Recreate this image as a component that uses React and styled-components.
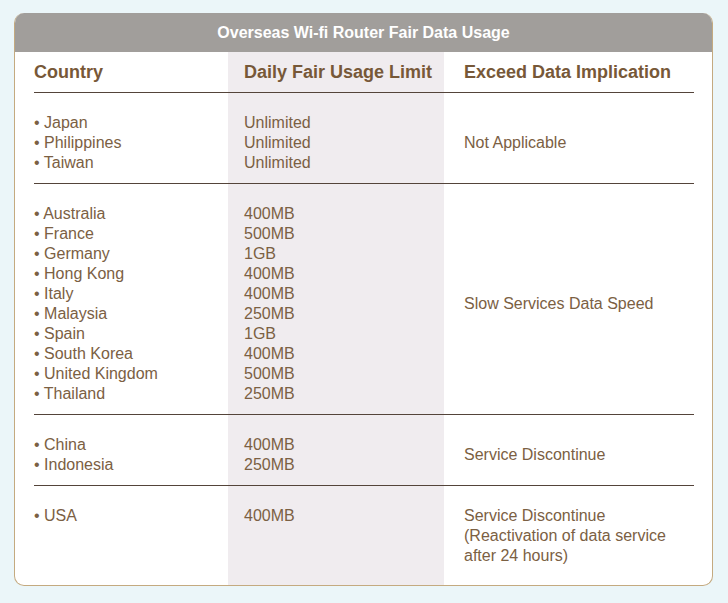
import React from 'react'
import styled, { createGlobalStyle } from 'styled-components'

const GlobalStyle = createGlobalStyle`
  html, body {
    margin: 0;
    padding: 0;
    background: #ebf6f9;
  }
  body {
    font-family: "Liberation Sans", Arial, Helvetica, sans-serif;
  }
`

const Page = styled.div`
  padding: 13px 0 0 14px;
`

const Card = styled.div`
  width: 699px;
  box-sizing: border-box;
  background: #fff;
  border: 1px solid #c4aa80;
  border-top: none;
  border-radius: 10px;
  overflow: hidden;
`

const TitleBar = styled.div`
  height: 39px;
  background: #a19e9b;
  color: #fff;
  font-size: 16px;
  font-weight: bold;
  display: flex;
  align-items: center;
  justify-content: center;
`

const Body = styled.div`
  padding: 0 18px 0 19px;
`

const Row = styled.div`
  display: grid;
  grid-template-columns: 194px 216px 250px;
  border-bottom: ${(p) => (p.$last ? 'none' : '1px solid #54443a')};
`

const Cell = styled.div`
  padding: ${(p) => (p.$head ? '10px' : '20px')} 0
    ${(p) => (p.$head ? '10px' : p.$last ? '19px' : '10px')}
    ${(p) => p.$pad || 0}px;
  background: ${(p) => (p.$shade ? '#f0ecef' : 'transparent')};
  color: ${(p) => (p.$head ? '#775838' : '#7b6043')};
  font-size: ${(p) => (p.$head ? '18px' : '16px')};
  font-weight: ${(p) => (p.$head ? 'bold' : 'normal')};
  line-height: 20px;
  display: flex;
  flex-direction: column;
  justify-content: ${(p) => (p.$center ? 'center' : 'flex-start')};
`

const Line = styled.div`
  white-space: nowrap;
`

const rows = [
  {
    countries: ['Japan', 'Philippines', 'Taiwan'],
    limits: ['Unlimited', 'Unlimited', 'Unlimited'],
    implication: ['Not Applicable'],
  },
  {
    countries: [
      'Australia',
      'France',
      'Germany',
      'Hong Kong',
      'Italy',
      'Malaysia',
      'Spain',
      'South Korea',
      'United Kingdom',
      'Thailand',
    ],
    limits: ['400MB', '500MB', '1GB', '400MB', '400MB', '250MB', '1GB', '400MB', '500MB', '250MB'],
    implication: ['Slow Services Data Speed'],
  },
  {
    countries: ['China', 'Indonesia'],
    limits: ['400MB', '250MB'],
    implication: ['Service Discontinue'],
  },
  {
    countries: ['USA'],
    limits: ['400MB'],
    implication: ['Service Discontinue', '(Reactivation of data service', 'after 24 hours)'],
  },
]

function App() {
  return (
    <Page>
      <GlobalStyle />
      <Card>
        <TitleBar>Overseas Wi-fi Router Fair Data Usage</TitleBar>
        <Body>
          <Row>
            <Cell $head>Country</Cell>
            <Cell $head $shade $pad={16}>
              Daily Fair Usage Limit
            </Cell>
            <Cell $head $pad={20}>
              Exceed Data Implication
            </Cell>
          </Row>
          {rows.map((row, i) => {
            const last = i === rows.length - 1
            return (
              <Row key={i} $last={last}>
                <Cell $last={last}>
                  {row.countries.map((c) => (
                    <Line key={c}>• {c}</Line>
                  ))}
                </Cell>
                <Cell $last={last} $shade $pad={16}>
                  {row.limits.map((l, j) => (
                    <Line key={j}>{l}</Line>
                  ))}
                </Cell>
                <Cell $last={last} $pad={20} $center>
                  {row.implication.map((t) => (
                    <Line key={t}>{t}</Line>
                  ))}
                </Cell>
              </Row>
            )
          })}
        </Body>
      </Card>
    </Page>
  )
}

export default App
